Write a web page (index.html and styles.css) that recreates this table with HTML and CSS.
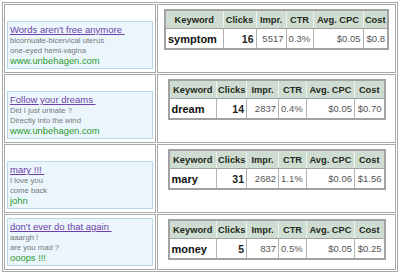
FILE: index.html
```html
<!DOCTYPE html>
<html>
<head>
<meta charset="utf-8">
<link rel="stylesheet" href="styles.css">
</head>
<body>
<div class="report">
  <div class="row tall">
    <div class="cell ad-cell">
      <div class="ad">
        <a class="ad-title">Words aren't free anymore&nbsp;</a>
        <div class="ad-line">bicornuate-bicervical uterus</div>
        <div class="ad-line">one-eyed hemi-vagina</div>
        <div class="ad-url">www.unbehagen.com</div>
      </div>
    </div>
    <div class="cell stats-cell">
      <table class="stats wide">
        <colgroup><col class="c-kw"><col class="c-clk"><col class="c-imp"><col class="c-ctr"><col class="c-cpc"><col class="c-cost"></colgroup>
        <thead><tr><th>Keyword</th><th>Clicks</th><th>Impr.</th><th>CTR</th><th>Avg. CPC</th><th>Cost</th></tr></thead>
        <tbody><tr><td class="kw">symptom</td><td class="num clk">16</td><td class="num">5517</td><td class="pct">0.3%</td><td class="num">$0.05</td><td class="num">$0.8</td></tr></tbody>
      </table>
    </div>
  </div>
  <div class="row tall">
    <div class="cell ad-cell">
      <div class="ad">
        <a class="ad-title">Follow your dreams&nbsp;</a>
        <div class="ad-line">Did I just urinate ?</div>
        <div class="ad-line">Directly into the wind</div>
        <div class="ad-url">www.unbehagen.com</div>
      </div>
    </div>
    <div class="cell stats-cell">
      <table class="stats">
        <colgroup><col class="c-kw"><col class="c-clk"><col class="c-imp"><col class="c-ctr"><col class="c-cpc"><col class="c-cost"></colgroup>
        <thead><tr><th>Keyword</th><th>Clicks</th><th>Impr.</th><th>CTR</th><th>Avg. CPC</th><th>Cost</th></tr></thead>
        <tbody><tr><td class="kw">dream</td><td class="num clk">14</td><td class="num">2837</td><td class="pct">0.4%</td><td class="num">$0.05</td><td class="num">$0.70</td></tr></tbody>
      </table>
    </div>
  </div>
  <div class="row tall">
    <div class="cell ad-cell">
      <div class="ad">
        <a class="ad-title">mary !!!&nbsp;</a>
        <div class="ad-line">I love you</div>
        <div class="ad-line">come back</div>
        <div class="ad-url">john</div>
      </div>
    </div>
    <div class="cell stats-cell">
      <table class="stats">
        <colgroup><col class="c-kw"><col class="c-clk"><col class="c-imp"><col class="c-ctr"><col class="c-cpc"><col class="c-cost"></colgroup>
        <thead><tr><th>Keyword</th><th>Clicks</th><th>Impr.</th><th>CTR</th><th>Avg. CPC</th><th>Cost</th></tr></thead>
        <tbody><tr><td class="kw">mary</td><td class="num clk">31</td><td class="num">2682</td><td class="pct">1.1%</td><td class="num">$0.06</td><td class="num">$1.56</td></tr></tbody>
      </table>
    </div>
  </div>
  <div class="row">
    <div class="cell ad-cell">
      <div class="ad">
        <a class="ad-title">don't ever do that again&nbsp;</a>
        <div class="ad-line">aaargh !</div>
        <div class="ad-line">are you mad ?</div>
        <div class="ad-url">ooops !!!</div>
      </div>
    </div>
    <div class="cell stats-cell">
      <table class="stats">
        <colgroup><col class="c-kw"><col class="c-clk"><col class="c-imp"><col class="c-ctr"><col class="c-cpc"><col class="c-cost"></colgroup>
        <thead><tr><th>Keyword</th><th>Clicks</th><th>Impr.</th><th>CTR</th><th>Avg. CPC</th><th>Cost</th></tr></thead>
        <tbody><tr><td class="kw">money</td><td class="num clk">5</td><td class="num">837</td><td class="pct">0.5%</td><td class="num">$0.05</td><td class="num">$0.25</td></tr></tbody>
      </table>
    </div>
  </div>
</div>
</body>
</html>
```
FILE: styles.css
```css
html, body {
  margin: 0;
  padding: 0;
  background: #ffffff;
}
body {
  padding: 2px;
  font-family: "Liberation Sans", Arial, sans-serif;
}
.report {
  width: 396px;
  box-sizing: border-box;
  border: 1px solid #a8a8a8;
  padding: 1px;
  display: flex;
  flex-direction: column;
  gap: 1px;
}
.row {
  display: grid;
  grid-template-columns: 152px 1fr;
  column-gap: 1px;
}
.row.tall {
  height: 69px;
}
.cell {
  border: 1px solid #a8a8a8;
  box-sizing: border-box;
}
.ad-cell {
  display: flex;
  flex-direction: column;
  justify-content: flex-end;
  padding: 3px 2px 3px 2px;
}
.ad {
  border: 1px solid #b8dae8;
  background: #eaf6fc;
  padding: 2px 2px 1px 2px;
}
.ad-title {
  display: block;
  font-size: 9.5px;
  line-height: 12px;
  color: #7040a8;
  text-decoration: underline;
  white-space: nowrap;
}
.ad-line {
  font-size: 7.7px;
  line-height: 9.5px;
  color: #777777;
  white-space: nowrap;
}
.ad-url {
  font-size: 9.4px;
  line-height: 12px;
  color: #2f9a2f;
  white-space: nowrap;
}
.stats-cell {
  padding-top: 4px;
}
.stats {
  border-collapse: collapse;
  table-layout: fixed;
  width: 216px;
  margin: 0 auto;
  border: 2px solid #a2a2a2;
}
.stats.wide {
  width: 223px;
}
.c-kw { width: 48px; }
.c-clk { width: 30px; }
.c-imp { width: 32px; }
.c-ctr { width: 28px; }
.c-cpc { width: 48px; }
.c-cost { width: 30px; }
.wide .c-kw { width: 58px; }
.wide .c-clk { width: 33px; }
.wide .c-imp { width: 30px; }
.wide .c-ctr { width: 27px; }
.wide .c-cpc { width: 50px; }
.wide .c-cost { width: 25px; }
.stats th {
  background: #cfdcd1;
  color: #1e2a20;
  font-size: 9.3px;
  font-weight: bold;
  height: 17px;
  padding: 0 1px;
  text-align: center;
  white-space: nowrap;
  border-left: 1px solid #eef3ef;
  border-right: 1px solid #eef3ef;
  border-bottom: 1px solid #a2a2a2;
}
.stats td {
  height: 19px;
  padding: 0 2px;
  font-size: 9.5px;
  color: #555555;
  border: 1px solid #b2b2b2;
  white-space: nowrap;
}
.stats td.kw {
  font-size: 11px;
  font-weight: bold;
  color: #111111;
  text-align: left;
}
.stats td.num {
  text-align: right;
}
.stats td.clk {
  font-size: 10.5px;
  font-weight: bold;
  color: #222222;
}
.stats td.pct {
  text-align: left;
}
```
